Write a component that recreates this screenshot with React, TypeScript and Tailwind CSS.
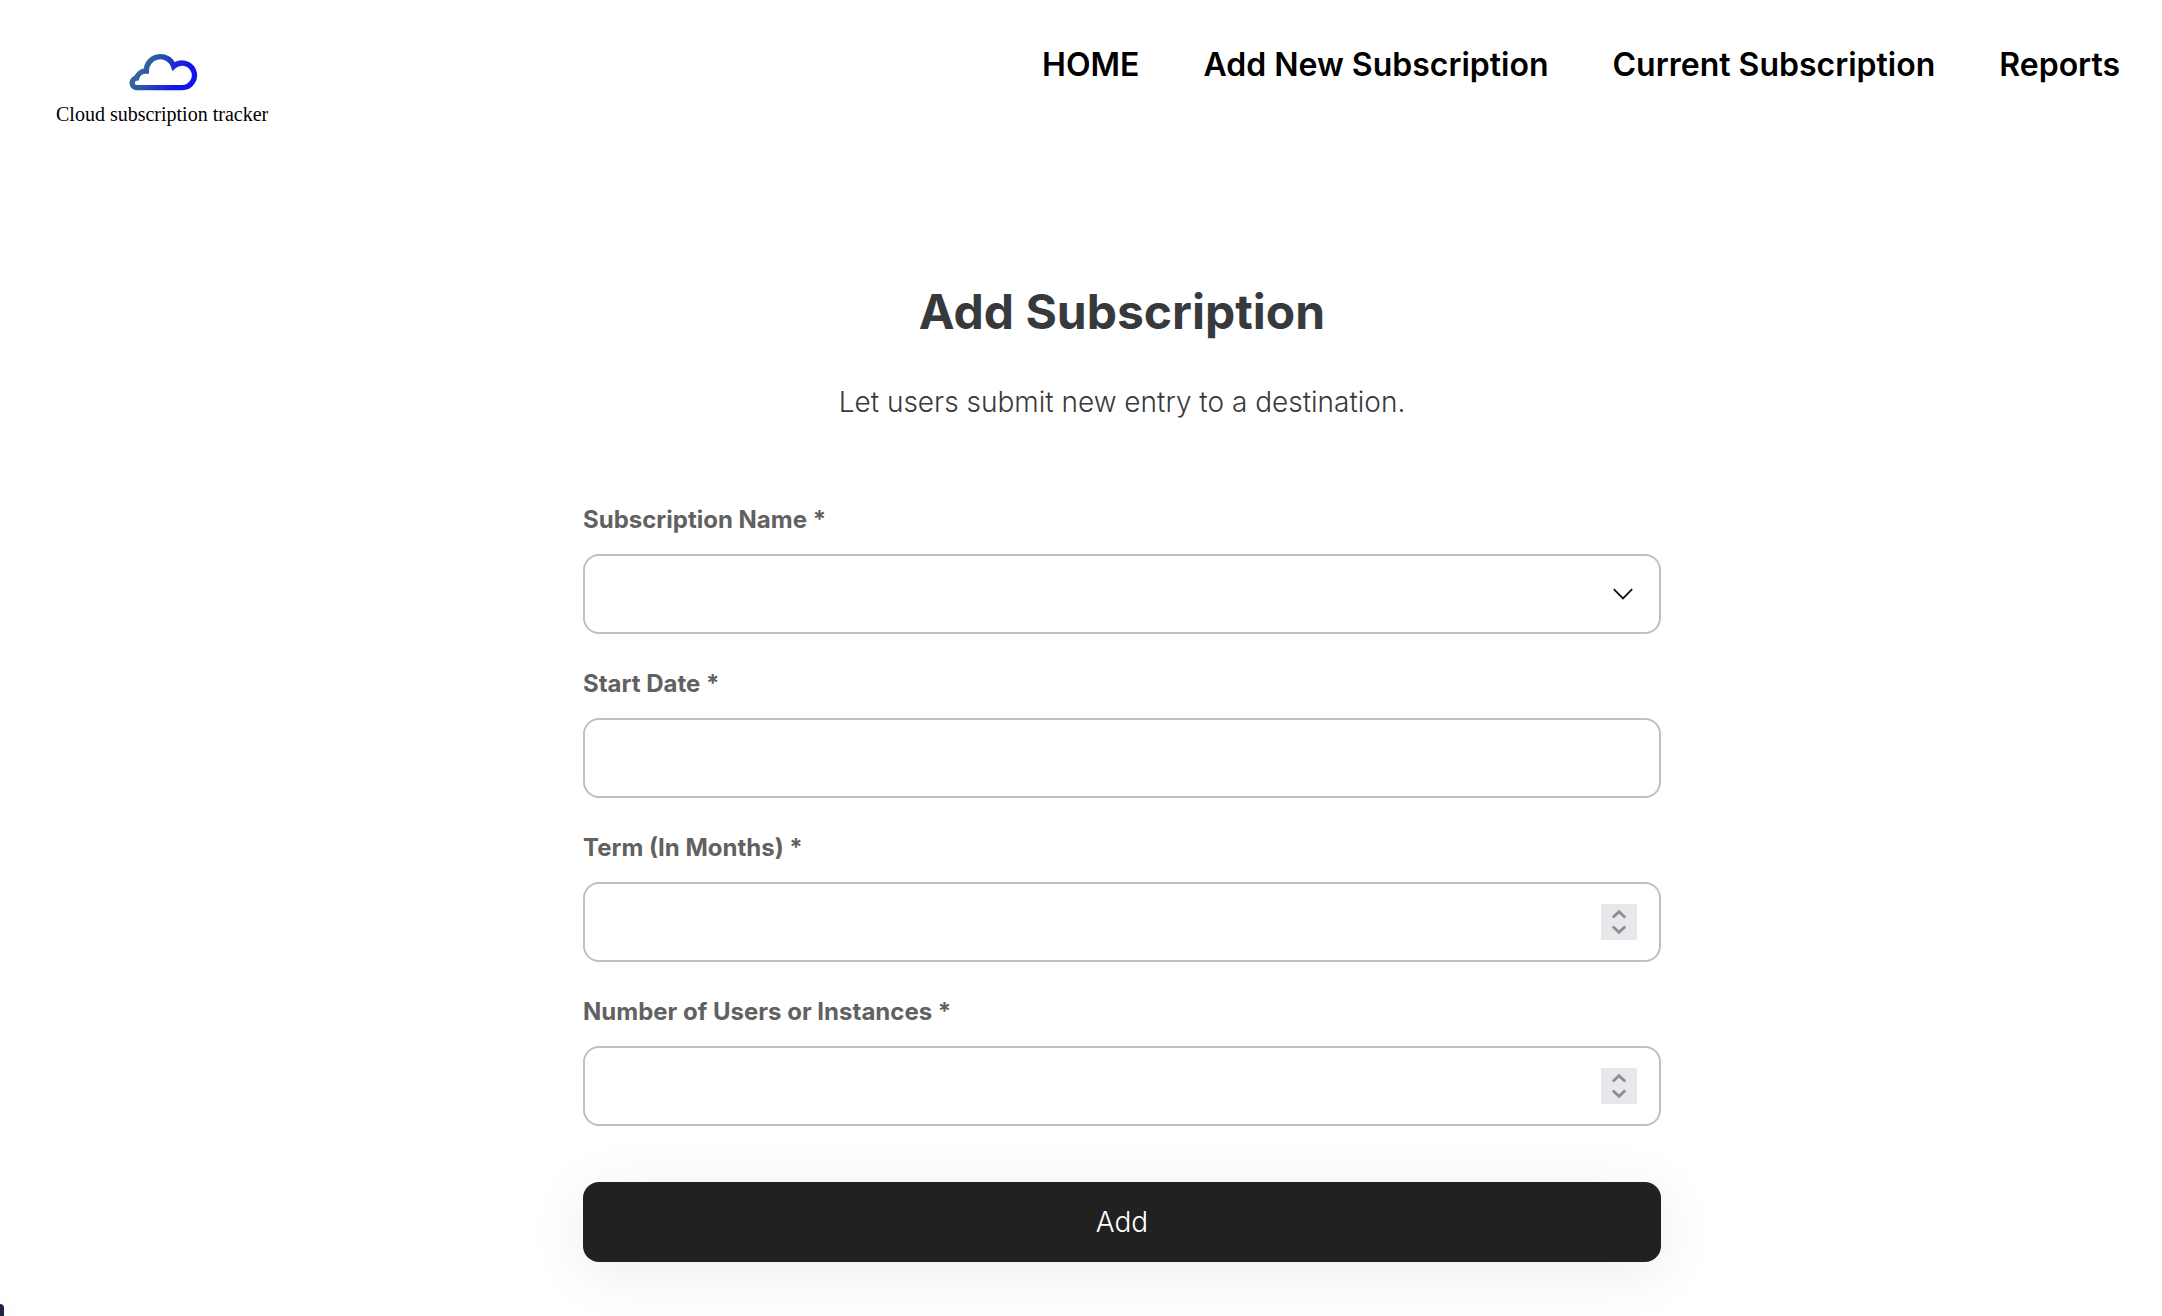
import { useRef } from 'react';

interface NumberFieldProps {
  id: string;
  label: string;
}

const links = ['HOME', 'Add New Subscription', 'Current Subscription', 'Reports'];

// Logo: cloud outline above the product name
function Logo() {
  return (
    <a href="#" className="flex flex-col items-center text-black">
      <svg width="71" height="41" viewBox="290 65 213 123" fill="none" aria-hidden="true">
        <defs>
          <linearGradient id="cloud" gradientUnits="userSpaceOnUse" x1="345" y1="105" x2="440" y2="160">
            <stop offset="0" stopColor="#34649a" />
            <stop offset="1" stopColor="#1414ee" />
          </linearGradient>
        </defs>
        <path
          d="M318 175H455A37 37 0 1 0 430 111A42 42 0 0 0 348 125A29 29 0 0 0 319 146A14.6 14.6 0 0 0 318 175Z"
          stroke="url(#cloud)"
          strokeWidth="16"
        />
      </svg>
      <span className="mt-2 font-['Liberation_Serif',serif] text-xl leading-7 whitespace-nowrap">
        Cloud subscription tracker
      </span>
    </a>
  );
}

// Number input with its own step buttons
function NumberField({ id, label }: NumberFieldProps) {
  const input = useRef<HTMLInputElement>(null);

  return (
    <div>
      <label htmlFor={id} className="block text-2xl font-bold text-[#616161]">
        {label} *
      </label>
      <div className="relative mt-[18px]">
        <input
          ref={input}
          id={id}
          type="number"
          min={0}
          required
          className="block h-20 w-full appearance-none rounded-2xl border-2 border-[#c0c0c0] bg-white px-6 text-2xl [-moz-appearance:textfield] [&::-webkit-inner-spin-button]:appearance-none"
        />
        <div className="absolute inset-y-0 right-6 my-auto flex h-9 w-9 flex-col bg-[#e8e8ea] text-[#8d8b99]">
          <button type="button" aria-label="Increase" className="h-[18px]" onClick={() => input.current?.stepUp()}>
            <svg width="36" height="18" viewBox="0 0 36 18" fill="none" stroke="currentColor" strokeWidth="2.8">
              <path d="M11.8 13.5L18 7.7L24.2 13.5" />
            </svg>
          </button>
          <button type="button" aria-label="Decrease" className="h-[18px]" onClick={() => input.current?.stepDown()}>
            <svg width="36" height="18" viewBox="0 0 36 18" fill="none" stroke="currentColor" strokeWidth="2.8">
              <path d="M11.8 4.5L18 10.3L24.2 4.5" />
            </svg>
          </button>
        </div>
      </div>
    </div>
  );
}

export default function App() {
  return (
    <div className="relative min-h-screen overflow-hidden bg-white font-[Inter,sans-serif]">
      <header className="flex items-start justify-between pt-[45px] pr-[42px] pl-14">
        <div className="pt-1.5">
          <Logo />
        </div>
        <nav className="flex gap-16 text-[32px] leading-10 font-semibold text-black">
          {links.map(link => (
            <a key={link} href="#">{link}</a>
          ))}
        </nav>
      </header>

      <main className="pt-[156px] pb-12 pl-[82px]">
        <form className="mx-auto w-full max-w-[1078px]" onSubmit={e => e.preventDefault()}>
          <div className="text-center text-[#373a3d]">
            <h1 className="text-5xl leading-14 font-bold">Add Subscription</h1>
            <p className="mt-11 text-[28px] leading-9 font-light">Let users submit new entry to a destination.</p>
          </div>

          <div className="mt-[84px] flex flex-col gap-[34px]">
            <div>
              <label htmlFor="name" className="block text-2xl font-bold text-[#616161]">
                Subscription Name *
              </label>
              <div className="relative mt-[18px]">
                <select
                  id="name"
                  required
                  className="block h-20 w-full appearance-none rounded-2xl border-2 border-[#c0c0c0] bg-white px-6 text-2xl"
                >
                  <option value=""></option>
                </select>
                <svg
                  className="pointer-events-none absolute inset-y-0 right-7 my-auto"
                  width="20"
                  height="12"
                  viewBox="0 0 20 12"
                  fill="none"
                  stroke="#111"
                  strokeWidth="1.8"
                >
                  <path d="M.8 1.2L10 10.4L19.2 1.2" />
                </svg>
              </div>
            </div>

            <div>
              <label htmlFor="start" className="block text-2xl font-bold text-[#616161]">
                Start Date *
              </label>
              <input
                id="start"
                type="text"
                required
                className="mt-[18px] block h-20 w-full rounded-2xl border-2 border-[#c0c0c0] bg-white px-6 text-2xl"
              />
            </div>

            <NumberField id="term" label="Term (In Months)" />
            <NumberField id="users" label="Number of Users or Instances" />
          </div>

          <button
            type="submit"
            className="mt-14 h-20 w-full rounded-2xl bg-[#212121] text-[28px] font-light text-white shadow-[0_10px_60px_rgba(0,0,0,0.08)]"
          >
            Add
          </button>
        </form>
      </main>

      {/* Edge of the collapsed widget */}
      <div className="absolute bottom-0 left-0 h-3 w-1 rounded-tr-full bg-[#1d2340] shadow-[0_0_16px_rgba(0,0,0,0.12)]" />
    </div>
  );
}
